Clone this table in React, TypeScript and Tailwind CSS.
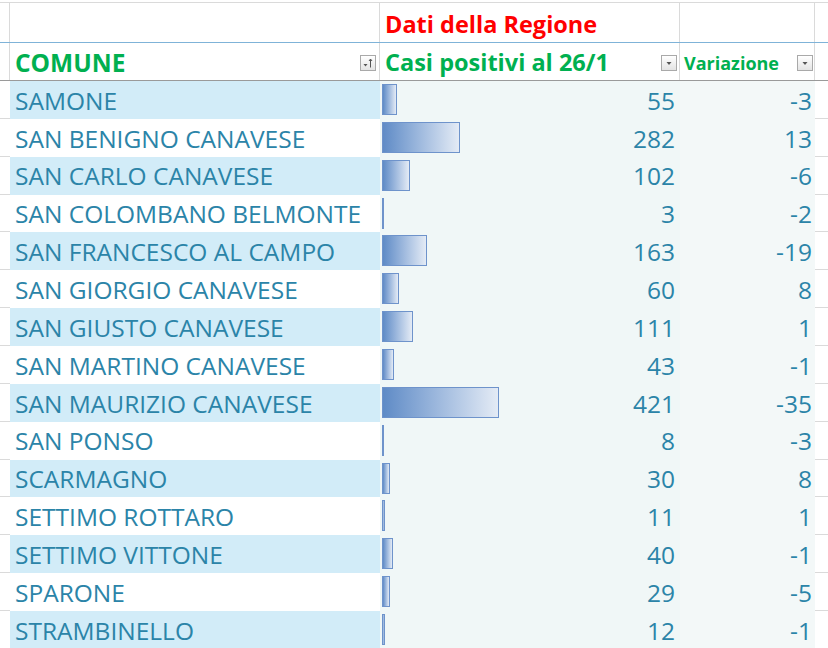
import React from 'react';

interface Comune {
  name: string;
  casi: number;
  variazione: number;
}

const comuni: Comune[] = [
  { name: 'SAMONE', casi: 55, variazione: -3 },
  { name: 'SAN BENIGNO CANAVESE', casi: 282, variazione: 13 },
  { name: 'SAN CARLO CANAVESE', casi: 102, variazione: -6 },
  { name: 'SAN COLOMBANO BELMONTE', casi: 3, variazione: -2 },
  { name: 'SAN FRANCESCO AL CAMPO', casi: 163, variazione: -19 },
  { name: 'SAN GIORGIO CANAVESE', casi: 60, variazione: 8 },
  { name: 'SAN GIUSTO CANAVESE', casi: 111, variazione: 1 },
  { name: 'SAN MARTINO CANAVESE', casi: 43, variazione: -1 },
  { name: 'SAN MAURIZIO CANAVESE', casi: 421, variazione: -35 },
  { name: 'SAN PONSO', casi: 8, variazione: -3 },
  { name: 'SCARMAGNO', casi: 30, variazione: 8 },
  { name: 'SETTIMO ROTTARO', casi: 11, variazione: 1 },
  { name: 'SETTIMO VITTONE', casi: 40, variazione: -1 },
  { name: 'SPARONE', casi: 29, variazione: -5 },
  { name: 'STRAMBINELLO', casi: 12, variazione: -1 },
];

// filter dropdown button like the one in the Excel header
const FilterButton: React.FC<{ sorted?: boolean }> = ({ sorted }) => (
  <span className="w-[16px] h-[16px] border border-[#a9a9a9] bg-gradient-to-b from-white to-[#e4e4e4] flex items-center justify-center shrink-0">
    <svg width="12" height="12" viewBox="0 0 12 12">
      {sorted ? (
        <>
          <path d="M1.5 7 L5.5 7 L3.5 9.5 Z" fill="#555" />
          <path d="M8.5 10.5 L8.5 2.5" stroke="#555" strokeWidth="1" />
          <path d="M7 4 L8.5 2 L10 4" stroke="#555" strokeWidth="1" fill="none" />
        </>
      ) : (
        <path d="M3.5 5 L8.5 5 L6 8 Z" fill="#555" />
      )}
    </svg>
  </span>
);

const App: React.FC = () => {
  const barWidth = (v: number) => Math.max(2, v * 0.278);

  return (
    <div
      className="w-[828px] h-[648px] overflow-hidden bg-white pt-[2px]"
      style={{ fontFamily: '"Open Sans", "Noto Sans", sans-serif' }}
    >
      {/* Row 1: Dati della Regione */}
      <div className="flex h-[41px] border-t border-[#dadada] border-b border-b-[#7fb3d8]">
        <div className="w-[10px] border-r border-[#dadada]" />
        <div className="w-[370px] border-r border-[#dadada]" />
        <div className="w-[300px] border-r border-[#dadada] flex items-center pl-[5px] pt-[5px]">
          <span className="text-[23.5px] font-bold text-[#ff0000] leading-none">Dati della Regione</span>
        </div>
        <div className="w-[135px] border-r border-[#dadada]" />
        <div className="flex-1" />
      </div>

      {/* Row 2: intestazioni */}
      <div className="flex h-[38px] border-b border-[#9a9a9a]">
        <div className="w-[10px] border-r border-[#dadada]" />
        <div className="w-[370px] border-r border-[#dadada] flex items-center justify-between pl-[5px] pr-[3px] pt-[3px]">
          <span className="text-[24.5px] font-bold text-[#00b050] leading-none">COMUNE</span>
          <FilterButton sorted />
        </div>
        <div className="w-[300px] border-r border-[#dadada] flex items-center justify-between pl-[5px] pr-[2px] pt-[3px]">
          <span className="text-[23.5px] font-bold text-[#00b050] leading-none">Casi positivi al 26/1</span>
          <FilterButton />
        </div>
        <div className="w-[135px] border-r border-[#dadada] flex items-center justify-between pl-[4px] pr-[1px] pt-[3px]">
          <span className="text-[18px] font-bold text-[#00b050] leading-none">Variazione</span>
          <FilterButton />
        </div>
        <div className="flex-1" />
      </div>

      {/* Righe dati */}
      {comuni.map((c, i) => (
        <div key={c.name} className="flex h-[37.86px] text-[24.5px] text-[#2b84a8] leading-none">
          <div className="w-[10px] border-b border-[#dadada]" />
          <div className={`w-[370px] flex items-center pl-[5px] pt-[2px] ${i % 2 === 0 ? 'bg-[#d2ecf8]' : 'bg-white'}`}>
            {c.name}
          </div>
          <div className="w-[300px] bg-[#f0f7f7] relative flex items-center justify-end pr-[5px] pt-[2px]">
            <div
              className="absolute left-[2px] top-[3px] h-[31px] border border-[#6e93cb] bg-gradient-to-r from-[#5f8bc6] to-[#e4ebf5]"
              style={{ width: barWidth(c.casi) }}
            />
            <span className="relative">{c.casi}</span>
          </div>
          <div className="w-[135px] bg-[#f3f8f8] flex items-center justify-end pr-[3px] pt-[2px]">
            {c.variazione}
          </div>
          <div className="flex-1 border-b border-[#dadada]" />
        </div>
      ))}
    </div>
  );
};

export default App;
